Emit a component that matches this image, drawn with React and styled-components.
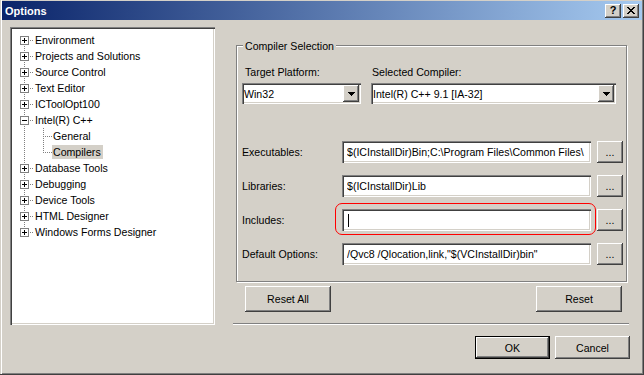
import React from 'react';
import styled, { createGlobalStyle } from 'styled-components';

const FACE = '#D4D0C8';
const RAISED = `inset -1px -1px #404040, inset 1px 1px #ffffff, inset -2px -2px #808080`;
const SUNKEN = `inset 1px 1px #808080, inset 2px 2px #404040, inset -1px -1px #ffffff, inset -2px -2px ${FACE}`;

const GlobalStyle = createGlobalStyle`
  html, body { margin: 0; padding: 0; background: ${FACE}; }
  body {
    font-family: "Liberation Sans", Arial, sans-serif;
    font-size: 10.6px;
    color: #000;
  }
  #root { width: 644px; height: 375px; }
`;

const Window = styled.div`
  box-sizing: border-box;
  width: 644px;
  height: 375px;
  background: ${FACE};
  padding: 1px 2px 2px 2px;
  box-shadow: inset -1px -1px #404040, inset 1px 0 ${FACE}, inset 2px 0 #ffffff, inset -2px -2px #808080;
  display: flex;
  flex-direction: column;
`;

const TitleBar = styled.div`
  flex: none;
  height: 19px;
  display: flex;
  align-items: center;
  padding: 0 3px;
  background: linear-gradient(to right, #0A246A, #A6CAF0);
`;

const Title = styled.span`
  flex: 1;
  color: #fff;
  font-weight: bold;
  font-size: 11px;
`;

const CaptionButton = styled.div`
  box-sizing: border-box;
  width: 16px;
  height: 14px;
  margin: 1px 0 0 2px;
  background: ${FACE};
  box-shadow: ${RAISED};
  display: flex;
  align-items: center;
  justify-content: center;
  font-weight: bold;
  font-size: 11px;
  line-height: 1;
  padding-bottom: 1px;
`;

const Body = styled.div`
  flex: 1;
  display: flex;
  align-items: flex-start;
  padding: 7px 0 0 8px;
`;

const Tree = styled.div`
  box-sizing: border-box;
  flex: none;
  width: 205px;
  height: 298px;
  background: #fff;
  box-shadow: ${SUNKEN};
  padding: 5px 2px 2px 2px;
`;

const TreeRow = styled.div`
  display: flex;
  align-items: center;
  height: 16px;
`;

const TreeLabel = styled.span`
  padding: 0 2px 0 1px;
  line-height: 14px;
  white-space: nowrap;
  background: ${(p) => (p.$selected ? FACE : 'transparent')};
`;

const RightCol = styled.div`
  flex: none;
  width: 397px;
  margin-left: 18px;
  display: flex;
  flex-direction: column;
`;

const GroupBox = styled.div`
  position: relative;
  box-sizing: border-box;
  width: 391px;
  height: 237px;
  margin: 18px 0 0 3px;
  border: 1px solid #808080;
  box-shadow: inset 1px 1px #ffffff, 1px 1px #ffffff;
  padding: 19px 0 0 5px;
`;

const Legend = styled.span`
  position: absolute;
  top: -7px;
  left: 6px;
  padding: 0 2px;
  line-height: 14px;
  background: ${FACE};
`;

const SelectGrid = styled.div`
  display: grid;
  grid-template-columns: 119px 245px;
  column-gap: 10px;
  row-gap: 4px;
`;

const FieldLabel = styled.span`
  line-height: 14px;
  padding-left: ${(p) => p.$indent || 0}px;
  white-space: nowrap;
`;

const Combo = styled.div`
  box-sizing: border-box;
  height: 21px;
  background: #fff;
  box-shadow: ${SUNKEN};
  display: flex;
  align-items: center;
  padding: 2px 2px 2px 2px;
`;

const ComboText = styled.span`
  flex: 1;
  white-space: nowrap;
  overflow: hidden;
`;

const DropButton = styled.div`
  box-sizing: border-box;
  width: 16px;
  height: 17px;
  background: ${FACE};
  box-shadow: ${RAISED};
  display: flex;
  align-items: center;
  justify-content: center;
`;

const PathRows = styled.div`
  margin-top: 37px;
  display: flex;
  flex-direction: column;
  gap: 12px;
`;

const PathRow = styled.div`
  display: flex;
  align-items: center;
  height: 22px;
`;

const RowLabel = styled.span`
  width: 100px;
  flex: none;
  white-space: nowrap;
`;

const TextField = styled.div`
  position: relative;
  box-sizing: border-box;
  width: 249px;
  height: 22px;
  flex: none;
  background: #fff;
  box-shadow: ${SUNKEN};
  padding: 0 3px 0 5px;
  display: flex;
  align-items: center;
`;

const FieldValue = styled.span`
  flex: 1;
  white-space: nowrap;
  overflow: hidden;
`;

const Caret = styled.span`
  display: block;
  width: 1px;
  height: 13px;
  margin-left: 1px;
  background: #000;
`;

const Annotation = styled.div`
  position: absolute;
  top: -6px;
  left: -7px;
  right: -5px;
  bottom: -4px;
  border: 1px solid #ff0000;
  border-radius: 7px;
  pointer-events: none;
`;

const Button = styled.div`
  box-sizing: border-box;
  flex: none;
  width: ${(p) => p.$w}px;
  height: ${(p) => p.$h}px;
  margin-left: ${(p) => p.$ml || 0}px;
  background: ${FACE};
  box-shadow: ${RAISED};
  border: ${(p) => (p.$default ? '1px solid #000' : 'none')};
  display: flex;
  align-items: center;
  justify-content: center;
  white-space: nowrap;
`;

const ResetRow = styled.div`
  display: flex;
  justify-content: space-between;
  margin-top: 4px;
  padding: 0 8px 0 12px;
`;

const Separator = styled.div`
  width: 396px;
  height: 0;
  margin-top: 11px;
  border-top: 1px solid #808080;
  border-bottom: 1px solid #ffffff;
`;

const DialogButtons = styled.div`
  display: flex;
  justify-content: flex-end;
  gap: 5px;
  margin-top: 11px;
`;

const CloseGlyph = () => {
  const rects = [];
  for (let r = 0; r < 7; r++) {
    rects.push(<rect key={`a${r}`} x={r} y={r} width={2} height={1} />);
    rects.push(<rect key={`b${r}`} x={6 - r} y={r} width={2} height={1} />);
  }
  return (
    <svg width="8" height="7" viewBox="0 0 8 7" shapeRendering="crispEdges" fill="#000">
      {rects}
    </svg>
  );
};

const DownArrow = () => (
  <svg width="7" height="4" viewBox="0 0 7 4" shapeRendering="crispEdges" fill="#000">
    <rect x="0" y="0" width="7" height="1" />
    <rect x="1" y="1" width="5" height="1" />
    <rect x="2" y="2" width="3" height="1" />
    <rect x="3" y="3" width="1" height="1" />
  </svg>
);

const DOT = '#808080';

const VDots = ({ x, y1, y2 }) => {
  const out = [];
  for (let y = y1; y < y2; y += 2) out.push(<rect key={`v${x}-${y}`} x={x} y={y} width={1} height={1} fill={DOT} />);
  return out;
};
const HDots = ({ y, x1, x2 }) => {
  const out = [];
  for (let x = x1; x < x2; x += 2) out.push(<rect key={`h${y}-${x}`} x={x} y={y} width={1} height={1} fill={DOT} />);
  return out;
};

const Gutter = ({ level, first, last, expander, parentHasNext }) => {
  if (level === 0) {
    return (
      <svg width="22" height="16" viewBox="0 0 22 16" shapeRendering="crispEdges" style={{ flex: 'none' }}>
        {!first && VDots({ x: 12, y1: 0, y2: 4 })}
        {!last && VDots({ x: 12, y1: 12, y2: 16 })}
        {HDots({ y: 8, x1: 18, x2: 22 })}
        <rect x="8.5" y="4.5" width="8" height="8" fill="#fff" stroke="#808080" />
        <rect x="10" y="8" width="5" height="1" fill="#000" />
        {expander === 'plus' && <rect x="12" y="6" width="1" height="5" fill="#000" />}
      </svg>
    );
  }
  return (
    <svg width="40" height="16" viewBox="0 0 40 16" shapeRendering="crispEdges" style={{ flex: 'none' }}>
      {parentHasNext && VDots({ x: 12, y1: 0, y2: 16 })}
      {VDots({ x: 31, y1: 0, y2: last ? 9 : 16 })}
      {HDots({ y: 8, x1: 33, x2: 40 })}
    </svg>
  );
};

const treeItems = [
  { label: 'Environment', level: 0, expander: 'plus' },
  { label: 'Projects and Solutions', level: 0, expander: 'plus' },
  { label: 'Source Control', level: 0, expander: 'plus' },
  { label: 'Text Editor', level: 0, expander: 'plus' },
  { label: 'ICToolOpt100', level: 0, expander: 'plus' },
  { label: 'Intel(R) C++', level: 0, expander: 'minus' },
  { label: 'General', level: 1 },
  { label: 'Compilers', level: 1, last: true, selected: true },
  { label: 'Database Tools', level: 0, expander: 'plus' },
  { label: 'Debugging', level: 0, expander: 'plus' },
  { label: 'Device Tools', level: 0, expander: 'plus' },
  { label: 'HTML Designer', level: 0, expander: 'plus' },
  { label: 'Windows Forms Designer', level: 0, expander: 'plus', last: true },
];

const paths = [
  { label: 'Executables:', value: '$(ICInstallDir)Bin;C:\\Program Files\\Common Files\\' },
  { label: 'Libraries:', value: '$(ICInstallDir)Lib' },
  { label: 'Includes:', value: '', focused: true },
  { label: 'Default Options:', value: '/Qvc8 /Qlocation,link,"$(VCInstallDir)bin"' },
];

export default function App() {
  return (
    <>
      <GlobalStyle />
      <Window>
        <TitleBar>
          <Title>Options</Title>
          <CaptionButton>?</CaptionButton>
          <CaptionButton>
            <CloseGlyph />
          </CaptionButton>
        </TitleBar>
        <Body>
          <Tree>
            {treeItems.map((it, i) => (
              <TreeRow key={it.label}>
                <Gutter
                  level={it.level}
                  first={i === 0}
                  last={it.last}
                  expander={it.expander}
                  parentHasNext
                />
                <TreeLabel $selected={it.selected}>{it.label}</TreeLabel>
              </TreeRow>
            ))}
          </Tree>
          <RightCol>
            <GroupBox>
              <Legend>Compiler Selection</Legend>
              <SelectGrid>
                <FieldLabel $indent={3}>Target Platform:</FieldLabel>
                <FieldLabel $indent={1}>Selected Compiler:</FieldLabel>
                <Combo>
                  <ComboText>Win32</ComboText>
                  <DropButton>
                    <DownArrow />
                  </DropButton>
                </Combo>
                <Combo>
                  <ComboText>Intel(R) C++ 9.1 [IA-32]</ComboText>
                  <DropButton>
                    <DownArrow />
                  </DropButton>
                </Combo>
              </SelectGrid>
              <PathRows>
                {paths.map((p) => (
                  <PathRow key={p.label}>
                    <RowLabel>{p.label}</RowLabel>
                    <TextField>
                      {p.focused ? <Caret /> : <FieldValue>{p.value}</FieldValue>}
                      {p.focused && <Annotation />}
                    </TextField>
                    <Button $w={26} $h={22} $ml={6}>...</Button>
                  </PathRow>
                ))}
              </PathRows>
            </GroupBox>
            <ResetRow>
              <Button $w={86} $h={26}>Reset All</Button>
              <Button $w={86} $h={26}>Reset</Button>
            </ResetRow>
            <Separator />
            <DialogButtons>
              <Button $w={75} $h={23} $default>OK</Button>
              <Button $w={75} $h={23}>Cancel</Button>
            </DialogButtons>
          </RightCol>
        </Body>
      </Window>
    </>
  );
}
